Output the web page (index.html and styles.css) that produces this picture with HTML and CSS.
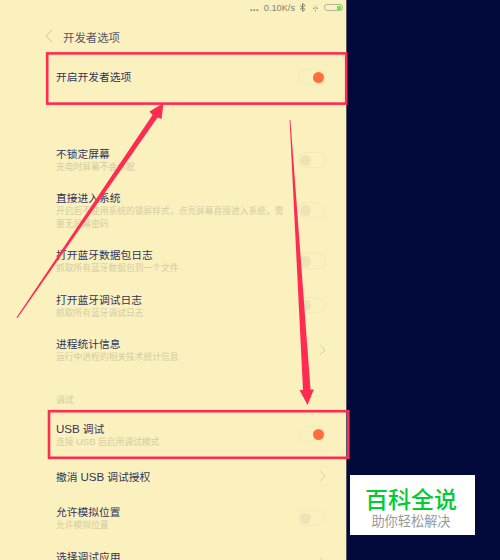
FILE: index.html
```
<!DOCTYPE html>
<html lang="zh">
<head>
<meta charset="utf-8">
	<title>开发者选项</title>
	<link rel="stylesheet" href="styles.css">
</head>
<body>

<div class="wrap">
	<div class="phone">
		<div class="status">
			<span class="dots">...</span>
			<span class="speed">0.10K/s</span>
			<svg class="bluetooth" width="7" height="9" viewBox="0 0 7 9"><path d="M1 2.5l5 4-2.5 2v-8L6 2.5l-5 4"/></svg>
			<svg class="wifi" width="7" height="8" viewBox="0 0 7 8"><path class="faint" d="M.8 2.2q2.7-2 5.4 0"/><path d="M1 4.4q2.5-1.2 5 0M3.5 6v1.4"/></svg>
			<span class="battery"></span>
		</div>
		<div class="header">
			<svg class="back" width="8" height="14" viewBox="0 0 8 14"><path d="M7 1L1 7l6 6"/></svg>
			<h1>开发者选项</h1>
		</div>

		<div class="row master">
			<div class="text"><h2>开启开发者选项</h2></div>
			<span class="switch on"></span>
		</div>

		<div class="list">
			<div class="row">
				<div class="text"><h2>不锁定屏幕</h2><p>充电时屏幕不会休眠</p></div>
				<span class="switch"></span>
			</div>
			<div class="row tall">
				<div class="text"><h2>直接进入系统</h2><p>开启后不使用系统的锁屏样式，点亮屏幕直接进入系统，需<br>要无屏幕密码</p></div>
				<span class="switch"></span>
			</div>
			<div class="row">
				<div class="text"><h2>打开蓝牙数据包日志</h2><p>抓取所有蓝牙数据包到一个文件</p></div>
				<span class="switch"></span>
			</div>
			<div class="row">
				<div class="text"><h2>打开蓝牙调试日志</h2><p>抓取所有蓝牙调试日志</p></div>
				<span class="switch"></span>
			</div>
			<div class="row">
				<div class="text"><h2>进程统计信息</h2><p>运行中进程的相关技术统计信息</p></div>
				<svg class="more" width="7" height="12" viewBox="0 0 7 12"><path d="M1 1l5 5-5 5"/></svg>
			</div>
		</div>

		<div class="group">调试</div>
		<div class="list">
			<div class="row">
				<div class="text"><h2><span class="latin">USB</span> 调试</h2><p>连接 <span class="latin">USB</span> 后启用调试模式</p></div>
				<span class="switch on"></span>
			</div>
			<div class="row short">
				<div class="text"><h2>撤消 <span class="latin">USB</span> 调试授权</h2></div>
				<svg class="more" width="7" height="12" viewBox="0 0 7 12"><path d="M1 1l5 5-5 5"/></svg>
			</div>
			<div class="row">
				<div class="text"><h2>允许模拟位置</h2><p>允许模拟位置</p></div>
				<span class="switch"></span>
			</div>
			<div class="row last">
				<div class="text"><h2>选择调试应用</h2></div>
				<svg class="more" width="7" height="12" viewBox="0 0 7 12"><path d="M1 1l5 5-5 5"/></svg>
			</div>
		</div>
	</div>

	<!-- red boxes and arrows -->
	<svg class="marks" width="500" height="560" viewBox="0 0 500 560">
		<rect x="47.2" y="53.4" width="299" height="50.2"/>
		<rect x="49" y="411.2" width="299.3" height="46.6"/>
		<path d="M16.5 317.5L152.5 115l-3-3.5L163.5 103l-2 16-4-1.5L17.5 318z"/>
		<path d="M289.6 120h.8L310.5 389.5h3.3L307.5 405l-8-15h3.5z"/>
	</svg>

	<div class="brand">
		<strong>百科全说</strong>
		<span>助你轻松解决</span>
	</div>
</div>

</body>
</html>
```
FILE: styles.css
```
body{
	margin: 0;
	font-family: "Liberation Sans", "Noto Sans CJK SC", sans-serif;
}
.wrap{
	width: 500px;
	height: 560px;
	position: relative;
	overflow: hidden;
	background: #020a3c;
}
.phone{
	box-sizing: border-box;
	width: 347px;
	height: 560px;
	padding-left: 56px;
	padding-right: 20px;
	overflow: hidden;
	background: #faf1be;
	border-right: 1px solid #55556a;
}
h1, h2, p{
	margin: 0;
	font-weight: normal;
	white-space: nowrap;
}
svg path{
	fill: none;
}

.status{
	display: flex;
	align-items: center;
	height: 15px;
	margin-right: -17px;
	justify-content: flex-end;
	font-size: 9.2px;
	color: #858174;
}
.dots{
	margin-right: 5px;
	font-size: 11px;
	font-weight: bold;
	line-height: 11px;
}
.bluetooth{
	margin-left: 4px;
	stroke: #858174;
}
.wifi{
	margin: 1px 5px 0 6px;
	stroke: #99947f;
}
.wifi .faint{
	stroke: #e5dcb2;
}
.battery{
	box-sizing: border-box;
	width: 19px;
	height: 7px;
	border: 1px solid #b9b397;
	border-radius: 3px;
	background: linear-gradient(#62ed45, #62ed45) right 1px center / 4px 4px no-repeat;
}

.header{
	display: flex;
	align-items: center;
	height: 42px;
	margin-left: -11px;
}
.back{
	stroke: #c9c09c;
}
.header h1{
	margin-left: 10px;
	padding-top: 1px;
	font-size: 11.4px;
	color: #57566a;
}

.row{
	box-sizing: border-box;
	display: flex;
	align-items: center;
	justify-content: space-between;
	height: 44.7px;
}
.row .text{
	padding-top: 1px;
}
.row h2{
	font-size: 10.75px;
	line-height: 13px;
	color: #33335a;
}
.row h2 .latin{
	font-size: 11.6px;
}
.row p{
	font-size: 8.75px;
	line-height: 12.5px;
	color: #d5cca4;
}
.row p .latin{
	font-size: 9.5px;
}
.master{
	height: 40px;
	margin-bottom: 41.2px;
}
.tall{
	height: 56px;
}
.short{
	height: 39px;
}
.last{
	align-items: flex-start;
	padding-top: 9px;
}
.last .more{
	margin-top: 7px;
}
.group{
	height: 39.5px;
	font-size: 8.75px;
	line-height: 55px;
	color: #d5cca4;
}

.switch{
	box-sizing: border-box;
	flex: none;
	width: 28px;
	height: 16px;
	padding: 1px 1px 2px;
	margin-top: -1px;
	border: 1px solid #f3e9b9;
	border-radius: 8px;
}
.switch:before{
	content: "";
	display: block;
	width: 11px;
	height: 11px;
	margin-top: 1px;
	border-radius: 50%;
	background: #ede3b5;
}
.switch.on:before{
	margin-left: 13px;
	background: #ff6f3c;
}
.more{
	margin-top: -1px;
	stroke: #d8cea6;
}

.marks{
	position: absolute;
	left: 0;
	top: 0;
}
.marks rect{
	fill: none;
	stroke: #ff2b50;
	stroke-width: 2.6;
}
.marks path{
	fill: #ff2b50;
}

.brand{
	position: absolute;
	left: 350px;
	top: 475px;
	width: 125px;
	height: 60px;
	background: #fff;
	text-align: center;
}
.brand strong{
	display: block;
	margin: 12px 3px 0 0;
	font-size: 23px;
	line-height: 26px;
	font-weight: 500;
	color: #0c3;
}
.brand span{
	display: block;
	margin: 1px 3px 0 0;
	font-size: 13.2px;
	line-height: 16px;
	color: #999;
}
```
